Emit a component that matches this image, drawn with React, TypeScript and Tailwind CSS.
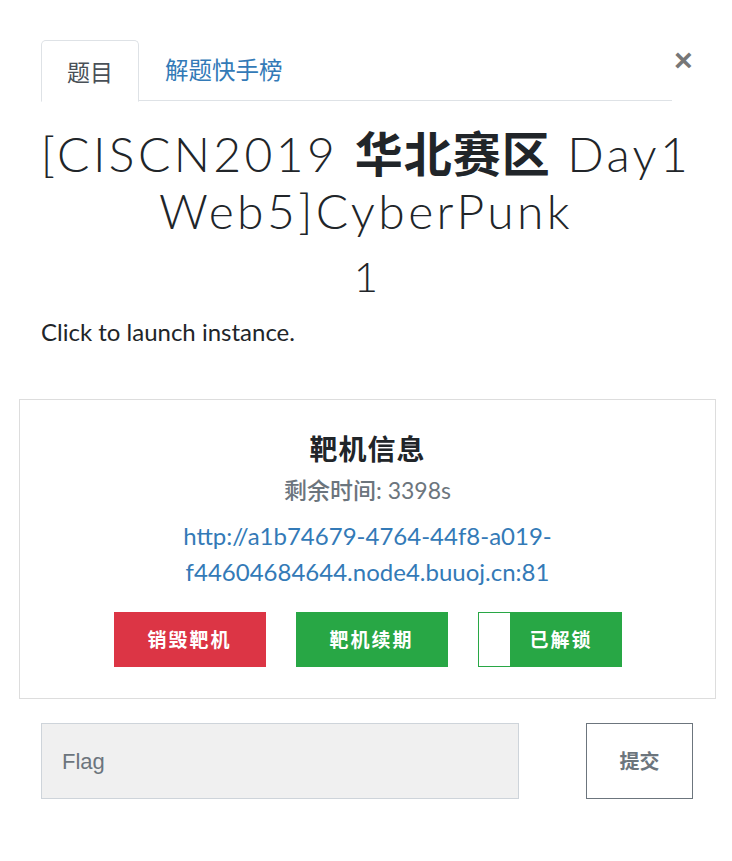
import React from "react";

export default function App() {
  return (
    <div className="w-[732px] h-[861px] bg-white relative" style={{ fontFamily: "Lato, 'Noto Sans CJK SC', sans-serif" }}>
      {/* close */}
      <div className="absolute left-[674px] top-[44px] text-[32px] font-bold leading-none text-[#777]" style={{ fontFamily: "'Liberation Sans', sans-serif" }}>×</div>

      {/* tabs */}
      <div className="pt-[40px] pl-[41px] pr-[60px]">
        <div className="flex border-b border-[#dee2e6] h-[61px]">
          <div className="w-[98px] h-[62px] -mb-px border border-[#dee2e6] border-b-white rounded-t-[5px] bg-white flex items-center justify-center text-[23px] text-[#495057]" style={{ fontFamily: "'Noto Sans CJK SC', sans-serif" }}>
            题目
          </div>
          <div className="px-[26px] flex items-center text-[23.5px] text-[#337ab7]" style={{ fontFamily: "'Noto Sans CJK SC', sans-serif" }}>
            解题快手榜
          </div>
        </div>
      </div>

      {/* title */}
      <div className="px-[30px] pt-[22px] text-center text-[#212529]">
        <div className="text-[48px] leading-[57px] font-light tracking-[3.4px]" style={{ fontFamily: "Lato, 'Noto Sans CJK SC', sans-serif" }}>
          [CISCN2019 <span className="font-bold tracking-[1px]" style={{ fontFamily: "'Noto Sans CJK SC', sans-serif" }}>华北赛区</span> Day1 Web5]CyberPunk
        </div>
        <div className="text-[42px] leading-[50px] mt-[12px] font-light">1</div>
      </div>
      <div className="px-[41px] mt-[15px] text-[24px] leading-[32px] text-[#212529]">Click to launch instance.</div>

      {/* instance box */}
      <div className="ml-[19px] w-[697px] mt-[51px] h-[300px] border border-[#ddd] flex flex-col items-center">
        <div className="mt-[28px] text-[28px] leading-[40px] font-bold text-[#212529] tracking-[1px]" style={{ fontFamily: "'Noto Sans CJK SC', sans-serif" }}>靶机信息</div>
        <div className="mt-[4px] text-[23px] leading-[36px] text-[#6c757d]" style={{ fontFamily: "Lato, 'Noto Sans CJK SC', sans-serif" }}>
          <span className="font-medium">剩余时间:</span> 3398s
        </div>
        <div className="mt-[10px] text-[24px] leading-[36px] text-[#337ab7] text-center">
          http://a1b74679-4764-44f8-a019-<br />f44604684644.node4.buuoj.cn:81
        </div>
        <div className="mt-[22px] flex gap-[30px]" style={{ fontFamily: "'Noto Sans CJK SC', sans-serif" }}>
          <div className="w-[152px] h-[55px] bg-[#dc3545] text-white font-bold text-[19px] tracking-[2px] flex items-center justify-center">销毁靶机</div>
          <div className="w-[152px] h-[55px] bg-[#28a745] text-white font-bold text-[19px] tracking-[2px] flex items-center justify-center">靶机续期</div>
          <div className="w-[144px] h-[55px] bg-[#28a745] border border-[#28a745] flex">
            <div className="w-[31px] h-full bg-white"></div>
            <div className="flex-1 text-white font-bold text-[19px] tracking-[2px] flex items-center justify-center pr-[8px]">已解锁</div>
          </div>
        </div>
      </div>

      {/* flag row */}
      <div className="flex mt-[24px] pl-[41px]">
        <div className="w-[478px] h-[76px] bg-[#f0f0f0] border border-[#ced4da] flex items-center pl-[20px] text-[22px] text-[#6c757d]" style={{ fontFamily: "'Liberation Sans', sans-serif" }}>Flag</div>
        <div className="ml-[67px] w-[107px] h-[76px] border border-[#6c757d] flex items-center justify-center text-[20px] font-bold text-[#6c757d]" style={{ fontFamily: "'Noto Sans CJK SC', sans-serif" }}>提交</div>
      </div>
    </div>
  );
}
